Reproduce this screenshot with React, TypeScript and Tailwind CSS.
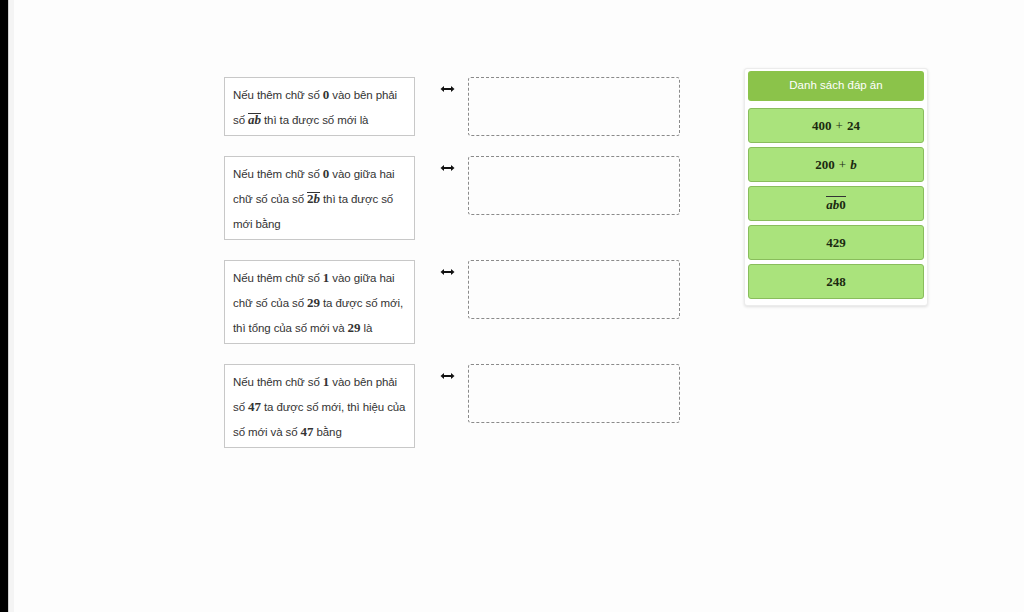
const Ov = ({ children }: { children: React.ReactNode }) => (
  <span className="relative inline-block leading-[14px]">
    <span className="absolute left-0 right-0 top-0 h-[1px] bg-[#333]" />
    {children}
  </span>
);

const M = ({ children }: { children: React.ReactNode }) => (
  <span className="font-['Liberation_Serif',serif] text-[13px] font-bold leading-[0]">{children}</span>
);

const V = ({ children }: { children: React.ReactNode }) => (
  <span className="italic">{children}</span>
);

const Plus = () => <span className="mx-[4px] font-normal">+</span>;

const questions: React.ReactNode[] = [
  <>
    Nếu thêm chữ số <M>0</M> vào bên phải
    <br />
    số{" "}
    <M>
      <Ov>
        <V>ab</V>
      </Ov>
    </M>{" "}
    thì ta được số mới là
  </>,
  <>
    Nếu thêm chữ số <M>0</M> vào giữa hai
    <br />
    chữ số của số{" "}
    <M>
      <Ov>
        2<V>b</V>
      </Ov>
    </M>{" "}
    thì ta được số
    <br />
    mới bằng
  </>,
  <>
    Nếu thêm chữ số <M>1</M> vào giữa hai
    <br />
    chữ số của số <M>29</M> ta được số mới,
    <br />
    thì tổng của số mới và <M>29</M> là
  </>,
  <>
    Nếu thêm chữ số <M>1</M> vào bên phải
    <br />
    số <M>47</M> ta được số mới, thì hiệu của
    <br />
    số mới và số <M>47</M> bằng
  </>,
];

const answers: React.ReactNode[] = [
  <>
    400
    <Plus />
    24
  </>,
  <>
    200
    <Plus />
    <V>b</V>
  </>,
  <Ov>
    <span className="inline-block pt-[2px]">
      <V>ab</V>0
    </span>
  </Ov>,
  <>429</>,
  <>248</>,
];

const Arrow = () => (
  <svg width="15" height="8" viewBox="0 0 15 8" className="mt-[8px] ml-[25px]">
    <path d="M3 4H12" stroke="#111" strokeWidth="2" />
    <path d="M0.5 4L4 1V7Z" fill="#111" />
    <path d="M14.5 4L11 1V7Z" fill="#111" />
  </svg>
);

export default function App() {
  return (
    <div className="w-[1024px] h-[612px] flex bg-white font-['Liberation_Sans',Arial,sans-serif] overflow-hidden">
      <div className="w-[8px] h-full bg-black" />
      <div className="w-[1px] h-full bg-[#cfcfcf]" />
      <div className="w-[5px] h-full bg-[#f4f4f4]" />
      <div className="flex-1 flex bg-[#fdfdfd]">
        <div className="ml-[210px] mt-[77px] flex flex-col gap-[20px]">
          {questions.map((q, i) => (
            <div key={i} className="flex items-start">
              <div className="w-[191px] border border-[#c8c8c8] bg-white pl-[8px] pr-[2px] pt-[5px] pb-[2px] text-[11.5px] leading-[25px] text-[#333] whitespace-nowrap tracking-[-0.1px]">
                {q}
              </div>
              <div className="w-[53px] flex">
                <Arrow />
              </div>
              <div className="w-[212px] h-[59px] border border-dashed border-[#8a8a8a] rounded-[3px]" />
            </div>
          ))}
        </div>
        <div className="ml-[64px] mt-[68px] w-[184px] h-[238px] bg-white border border-[#ececec] rounded-[3px] shadow-[0_1px_3px_rgba(0,0,0,0.12)] px-[3px] pt-[2px] flex flex-col gap-[4px] self-start">
          <div className="h-[30px] mb-[3px] bg-[#8bc34a] rounded-[3px] flex items-center justify-center text-white text-[11.5px]">
            Danh sách đáp án
          </div>
          {answers.map((a, i) => (
            <div
              key={i}
              className="h-[35px] bg-[#aae37c] border border-[#89bd5c] rounded-[3px] flex items-center justify-center text-[13px] text-[#1b2a10] font-bold font-['Liberation_Serif',serif]"
            >
              {a}
            </div>
          ))}
        </div>
      </div>
    </div>
  );
}
